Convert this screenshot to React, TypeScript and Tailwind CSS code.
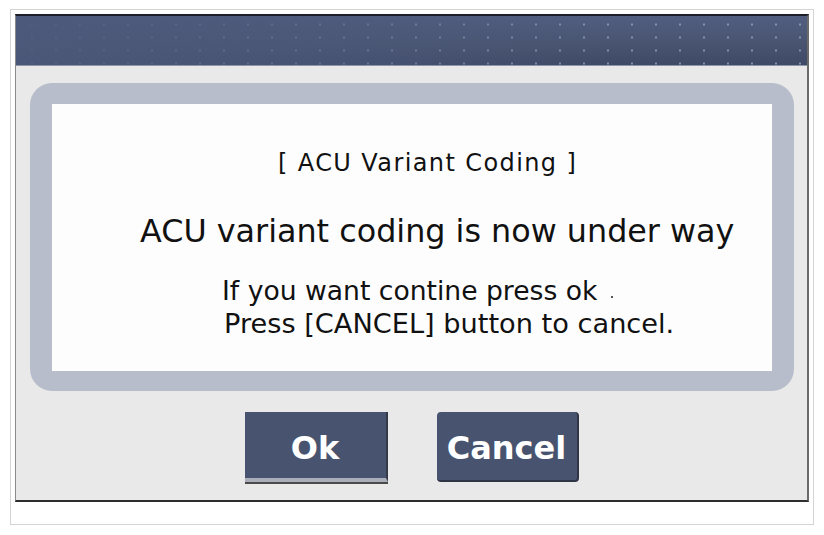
import React from "react";

export default function App() {
  return (
    <div className="w-[824px] h-[535px] bg-white pt-[9px] pl-[10px]">
      <div className="w-[804px] h-[516px] border border-[#d4d4d4] pt-[4px] pl-[4px]">
        {/* window */}
        <div className="w-[794px] h-[488px] flex flex-col border-t-2 border-t-[#1c1f29] border-l border-l-[#8a8a8a] border-r-2 border-r-[#6b6b6b] border-b-2 border-b-[#2e2e2e] bg-[#e9e9e9]">
          {/* title bar */}
          <div className="h-[50px] shrink-0 border-b border-b-[#8e96aa] [background-image:linear-gradient(to_right,rgba(76,89,122,0.9)_0%,rgba(76,89,122,0.6)_40%,rgba(76,89,122,0)_75%),radial-gradient(circle,rgba(150,165,200,0.75)_0.8px,transparent_1.4px),linear-gradient(to_bottom,#515e80,#48546f_60%,#3e4966)] [background-size:100%_100%,24px_13px,100%_100%] [background-position:0_0,4px_2px,0_0]" />
          {/* body */}
          <div className="flex-1 flex flex-col pt-[17px] pl-[14px]">
            <div className="w-[764px] h-[308px] rounded-[22px] bg-[#b8bdcc] pt-[21px] pl-[22px]">
              <div className="w-[720px] h-[267px] bg-[#fdfdfd] flex flex-col items-start font-['DejaVu_Sans',sans-serif] text-[#111111]">
                <div className="mt-[41px] ml-[226px] text-[24px] leading-[36px] tracking-[1.4px]">
                  [ ACU Variant Coding ]
                </div>
                <div className="mt-[30px] ml-[88px] text-[31.8px] leading-[40px]">
                  ACU variant coding is now under way
                </div>
                <div className="mt-[23px] ml-[170px] text-[26.6px] leading-[33px] flex items-start">
                  <span>If you want contine press ok</span>
                  <span className="ml-[14px] mt-[22px] w-[2px] h-[2px] bg-[#555]" />
                </div>
                <div className="ml-[172px] text-[27.2px] leading-[33px]">
                  Press [CANCEL] button to cancel.
                </div>
              </div>
            </div>
            <div className="flex justify-center gap-[49px] mt-[21px] mr-[14px] font-['DejaVu_Sans',sans-serif] font-bold text-white text-[32px]">
              <div className="w-[143px] h-[70px] bg-[#48546f] flex items-center justify-center border-r-2 border-r-[#34394a] border-b-[4px] border-b-[#a9aeb9] shadow-[0_2px_0_#4a4a4a] pt-[5px]">
                Ok
              </div>
              <div className="w-[142px] h-[70px] bg-[#48546f] rounded-[4px] flex items-center justify-center border-r-2 border-r-[#2f3547] border-b-2 border-b-[#2f3547] pt-[4px]">
                Cancel
              </div>
            </div>
          </div>
        </div>
      </div>
    </div>
  );
}
